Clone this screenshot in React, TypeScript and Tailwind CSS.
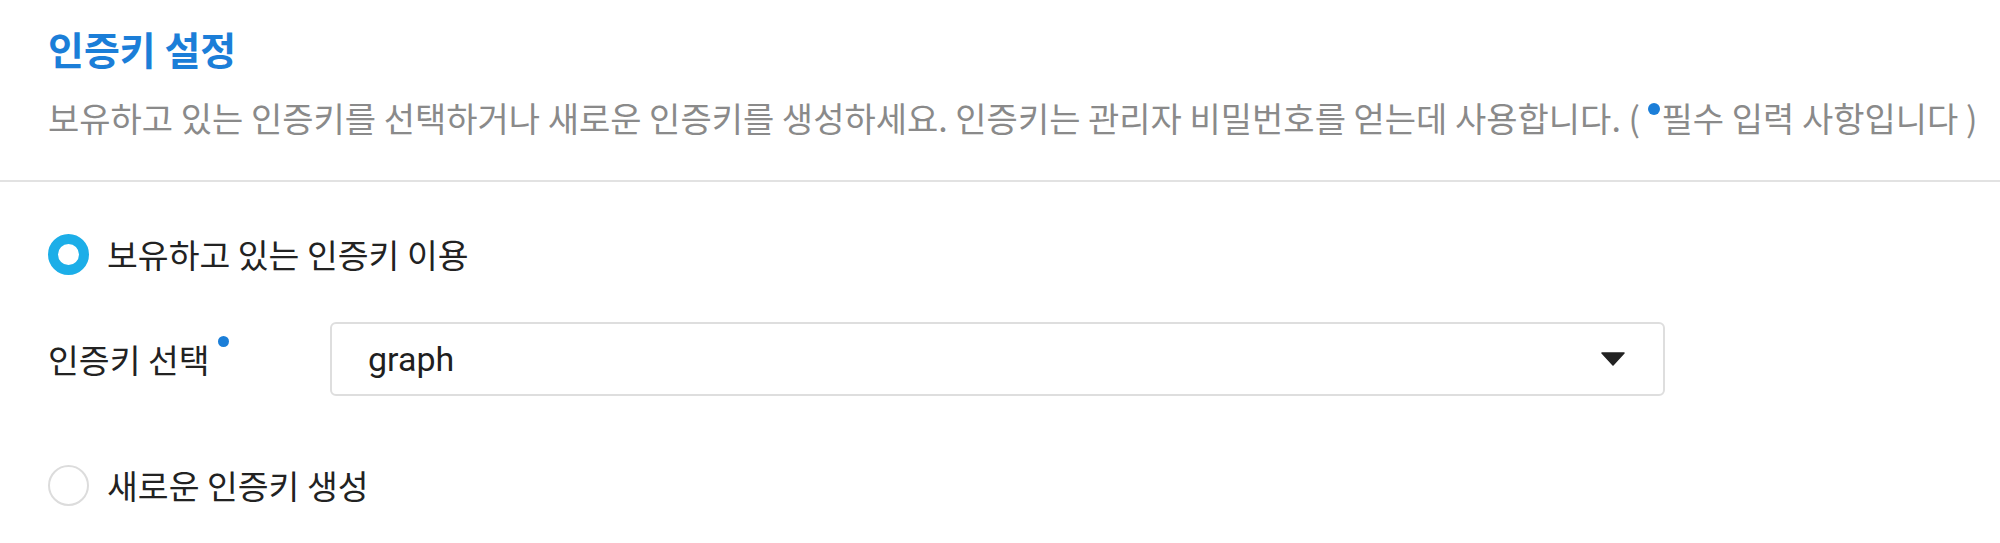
export default function App() {
  const font = { fontFamily: '"Noto Sans CJK KR", Roboto, sans-serif' };
  return (
    <div className="w-[2000px] h-[543px] bg-white overflow-hidden" style={font}>
      {/* 헤더 */}
      <div className="px-[48px] pt-[22px]">
        <h1 className="text-[39px] leading-[52px] font-bold text-[#1b7ed8]">인증키 설정</h1>
        <p className="mt-[24px] text-[34px] leading-[40px] text-[#8a8a8a] whitespace-nowrap">
          보유하고 있는 인증키를 선택하거나 새로운 인증키를 생성하세요. 인증키는 관리자 비밀번호를 얻는데 사용합니다. ({" "}
          <span className="inline-block w-[12px] h-[12px] rounded-full bg-[#1b7ed8] align-[0.5em] mr-[2px]" />필수 입력 사항입니다 )
        </p>
      </div>
      <div className="mt-[42px] h-[2px] bg-[#e2e2e2]" />

      {/* 옵션 */}
      <div className="px-[48px] pt-[52px]">
        <label className="flex items-center gap-[18px] h-[40px]">
          <span className="w-[41px] h-[41px] rounded-full border-[10px] border-[#1caee8] bg-white" />
          <span className="text-[33.5px] text-[#222]">보유하고 있는 인증키 이용</span>
        </label>

        <div className="flex items-center mt-[48px]">
          <div className="w-[282px] flex items-start text-[33.5px] text-[#222]">
            인증키 선택
            <span className="ml-[8px] mt-[2px] w-[11px] h-[11px] rounded-full bg-[#1b7ed8]" />
          </div>
          <div className="w-[1335px] h-[74px] border-2 border-[#dedede] rounded-[6px] flex items-center justify-between pl-[36px] pr-[38px]">
            <span className="text-[34px] text-[#1f1f1f]" style={{ fontFamily: 'Roboto, "Noto Sans CJK KR", sans-serif' }}>
              graph
            </span>
            <svg width="24" height="14" viewBox="0 0 24 14">
              <path d="M1 1 H23 L12 13 Z" fill="#222" stroke="#222" strokeWidth="1.5" strokeLinejoin="round" />
            </svg>
          </div>
        </div>

        <label className="flex items-center gap-[18px] h-[40px] mt-[69px]">
          <span className="w-[41px] h-[41px] rounded-full border-2 border-[#dcdcdc] bg-white" />
          <span className="text-[33.5px] text-[#222]">새로운 인증키 생성</span>
        </label>
      </div>
    </div>
  );
}
